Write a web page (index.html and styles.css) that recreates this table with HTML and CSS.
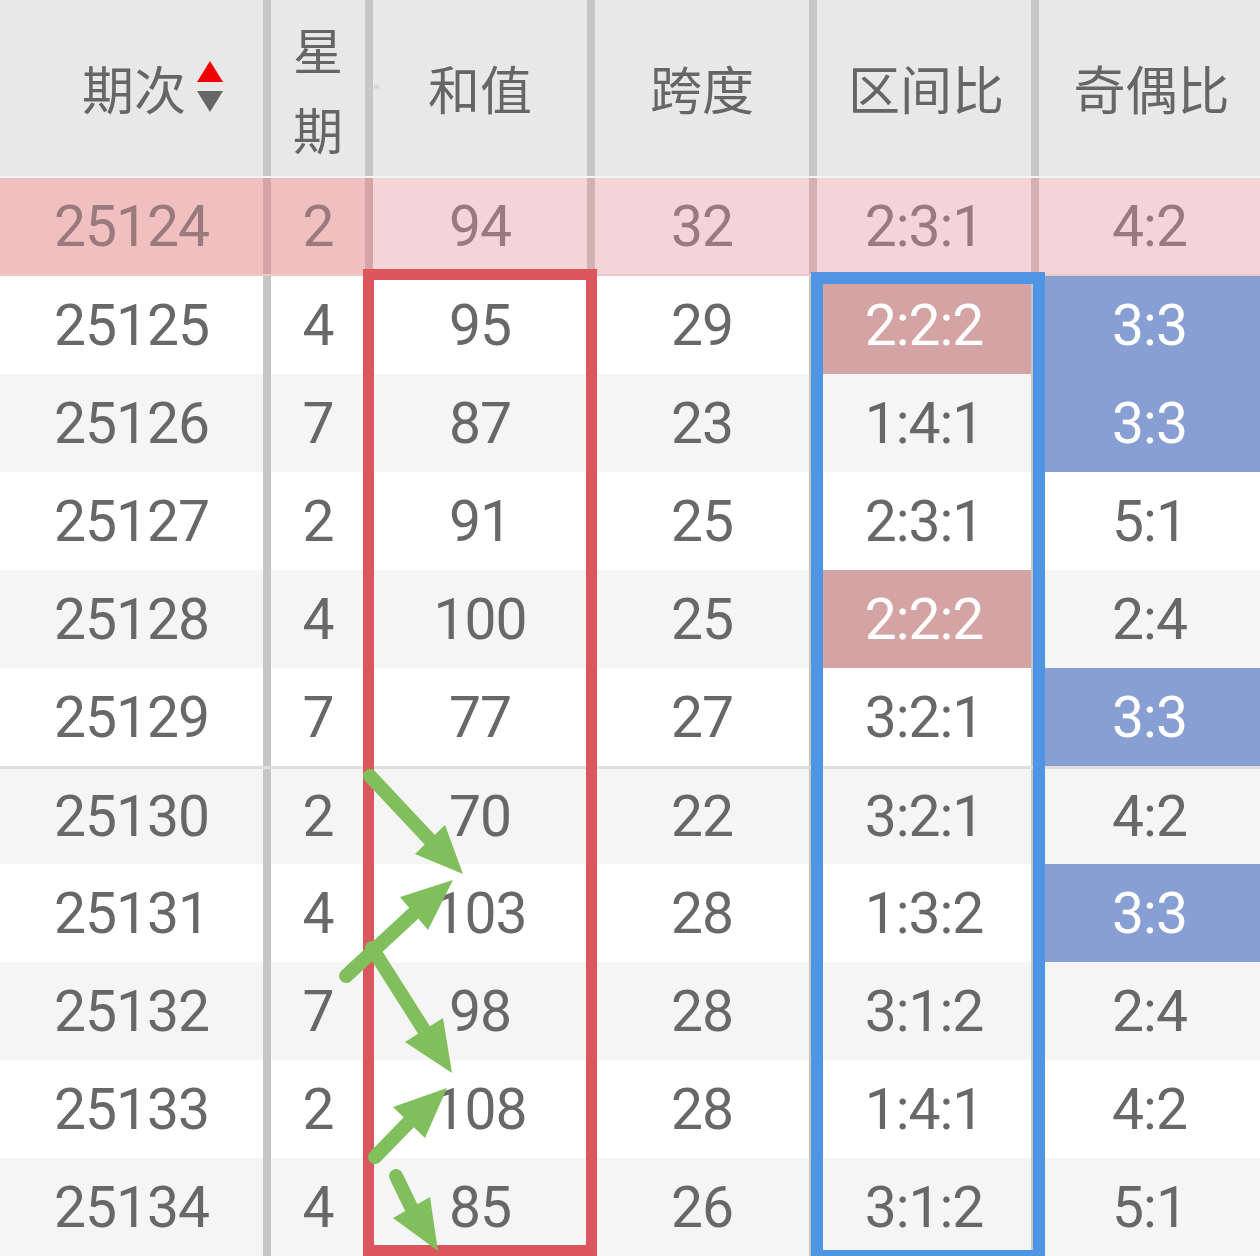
FILE: index.html
```html
<!DOCTYPE html>
<html lang="zh-CN">
<head>
<meta charset="utf-8">
<title>走势表</title>
<link rel="stylesheet" href="styles.css">
</head>
<body>
<div class="page">
  <div class="table">
    <div class="row head">
      <div class="cell c1 sort"><span>期次</span>
        <svg class="sort-icon" width="26" height="51" viewBox="0 0 26 51"><polygon points="13,0 26,21 0,21" fill="#f10000"/><polygon points="0,30 26,30 13,51" fill="#666"/></svg>
      </div>
      <div class="cell c2 stack"><span>星</span><span>期</span></div>
      <div class="cell c3">和值</div>
      <div class="cell c4">跨度</div>
      <div class="cell c5">区间比</div>
      <div class="cell c6">奇偶比</div>
    </div>
    <div class="row current">
      <div class="cell c1">25124</div><div class="cell c2">2</div><div class="cell c3">94</div><div class="cell c4">32</div><div class="cell c5">2:3:1</div><div class="cell c6">4:2</div>
    </div>
    <div class="row">
      <div class="cell c1">25125</div><div class="cell c2">4</div><div class="cell c3">95</div><div class="cell c4">29</div><div class="cell c5 hl-red">2:2:2</div><div class="cell c6 hl-blue">3:3</div>
    </div>
    <div class="row alt">
      <div class="cell c1">25126</div><div class="cell c2">7</div><div class="cell c3">87</div><div class="cell c4">23</div><div class="cell c5">1:4:1</div><div class="cell c6 hl-blue">3:3</div>
    </div>
    <div class="row">
      <div class="cell c1">25127</div><div class="cell c2">2</div><div class="cell c3">91</div><div class="cell c4">25</div><div class="cell c5">2:3:1</div><div class="cell c6">5:1</div>
    </div>
    <div class="row alt">
      <div class="cell c1">25128</div><div class="cell c2">4</div><div class="cell c3">100</div><div class="cell c4">25</div><div class="cell c5 hl-red">2:2:2</div><div class="cell c6">2:4</div>
    </div>
    <div class="row">
      <div class="cell c1">25129</div><div class="cell c2">7</div><div class="cell c3">77</div><div class="cell c4">27</div><div class="cell c5">3:2:1</div><div class="cell c6 hl-blue">3:3</div>
    </div>
    <div class="row alt divided">
      <div class="cell c1">25130</div><div class="cell c2">2</div><div class="cell c3">70</div><div class="cell c4">22</div><div class="cell c5">3:2:1</div><div class="cell c6">4:2</div>
    </div>
    <div class="row">
      <div class="cell c1">25131</div><div class="cell c2">4</div><div class="cell c3">103</div><div class="cell c4">28</div><div class="cell c5">1:3:2</div><div class="cell c6 hl-blue">3:3</div>
    </div>
    <div class="row alt">
      <div class="cell c1">25132</div><div class="cell c2">7</div><div class="cell c3">98</div><div class="cell c4">28</div><div class="cell c5">3:1:2</div><div class="cell c6">2:4</div>
    </div>
    <div class="row">
      <div class="cell c1">25133</div><div class="cell c2">2</div><div class="cell c3">108</div><div class="cell c4">28</div><div class="cell c5">1:4:1</div><div class="cell c6">4:2</div>
    </div>
    <div class="row alt">
      <div class="cell c1">25134</div><div class="cell c2">4</div><div class="cell c3">85</div><div class="cell c4">26</div><div class="cell c5">3:1:2</div><div class="cell c6">5:1</div>
    </div>
  </div>

  <span class="tick"></span>
  <div class="box box-red"></div>
  <div class="box box-blue"></div>

  <svg class="arrows" width="1260" height="1256" viewBox="0 0 1260 1256">
    <g stroke="#80bf5c" stroke-width="14" stroke-linecap="round" fill="none">
      <line x1="370" y1="776" x2="430" y2="840"/>
      <line x1="346" y1="976" x2="414" y2="913"/>
      <line x1="372" y1="948" x2="424" y2="1030"/>
      <line x1="375" y1="1157" x2="409" y2="1122"/>
      <line x1="396" y1="1176" x2="411" y2="1207"/>
    </g>
    <g fill="#80bf5c">
      <polygon points="463,874 415,854 445,825"/>
      <polygon points="453,880 400,897 428,930"/>
      <polygon points="452,1073 405,1042 443,1018"/>
      <polygon points="447,1088 393,1107 425,1138"/>
      <polygon points="438,1251 393,1218 430,1197"/>
    </g>
  </svg>
</div>
</body>
</html>
```

FILE: styles.css
```css
html, body {
  margin: 0;
  padding: 0;
  background: #ffffff;
  overflow: hidden;
}

.page {
  position: relative;
  width: 1260px;
  height: 1256px;
  overflow: hidden;
  font-family: Roboto, "Noto Sans CJK SC", sans-serif;
  color: #686868;
}

.table {
  display: flex;
  flex-direction: column;
}

.row {
  display: grid;
  grid-template-columns: 271px 102px 222px 222px 222px 221px;
  height: 98px;
  box-sizing: border-box;
  background: #ffffff;
}

.row.alt {
  background: #f5f5f5;
}

.row.divided {
  border-top: 3px solid #dedede;
}

.cell {
  display: flex;
  align-items: center;
  justify-content: center;
  border-right: 8px solid #c6c6c6;
  font-size: 57px;
  letter-spacing: -1px;
  line-height: 1;
  box-sizing: border-box;
}

.cell.c6 {
  border-right: none;
}

/* header */
.row.head {
  height: 178px;
  background: #e8e8e8;
  border-bottom: 2px solid #f3f3f3;
}

.row.head .cell {
  font-family: "Noto Sans CJK SC", sans-serif;
  font-size: 52px;
  letter-spacing: 0;
  color: #666666;
}

.row.head .c5,
.row.head .c6 {
  padding-left: 4px;
}

.cell.sort {
  justify-content: flex-end;
  padding-right: 40px;
  gap: 11px;
}

.sort-icon {
  display: block;
  margin-top: -3px;
}

.cell.stack {
  flex-direction: column;
  font-size: 50px !important;
  line-height: 80px;
}

/* current (highlighted) row */
.row.current {
  background: #f3d5d7;
  border-bottom: 2px solid #ecc8ca;
  color: #9b7a7d;
}

.row.current .cell {
  border-right-color: #d3b0b2;
}

.row.current .c1,
.row.current .c2 {
  background: #f0c0c1;
  border-right-color: #d5a4a6;
}

/* highlighted cells */
.cell.hl-red {
  background: #d4a4a5;
  color: #ffffff;
}

.cell.hl-blue {
  background: #879fd2;
  color: #ffffff;
}

/* overlays */
.tick {
  position: absolute;
  left: 374px;
  top: 85px;
  width: 5px;
  height: 4px;
  background: #d6d6d6;
}

.box {
  position: absolute;
  box-sizing: border-box;
}

.box-red {
  left: 363px;
  top: 269px;
  width: 234px;
  height: 987px;
  border: 11px solid #dc575d;
}

.box-blue {
  left: 811px;
  top: 272px;
  width: 234px;
  height: 990px;
  border: 12px solid #5094e4;
}

.arrows {
  position: absolute;
  left: 0;
  top: 0;
}
```
